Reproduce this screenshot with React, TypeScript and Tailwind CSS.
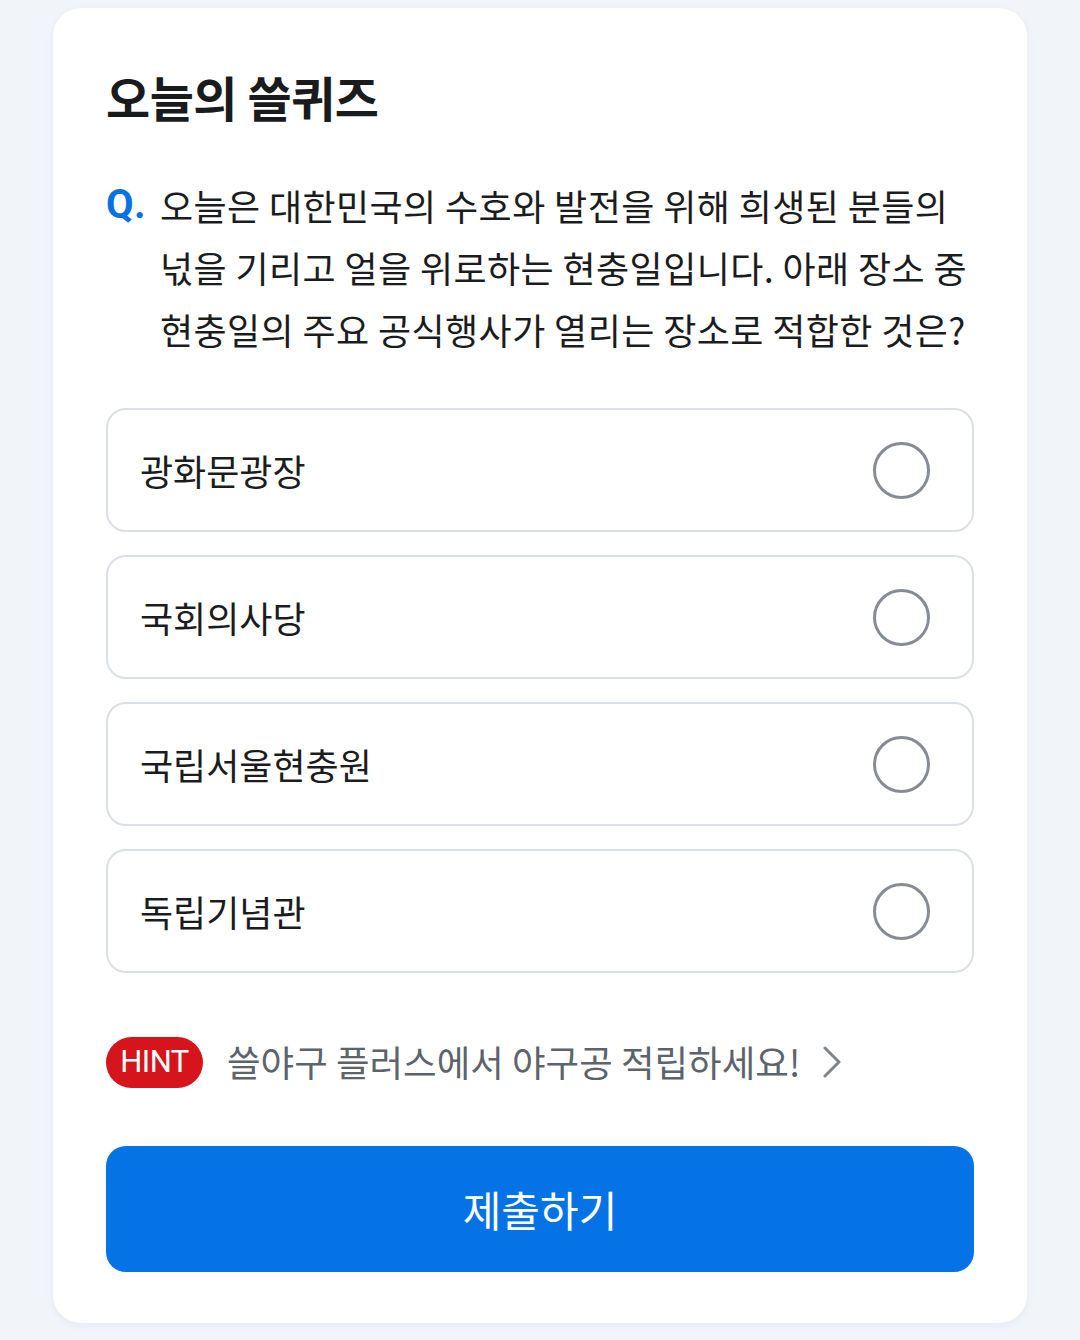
const options = ['광화문광장', '국회의사당', '국립서울현충원', '독립기념관'];

const font = { fontFamily: '"Noto Sans CJK KR", "Noto Sans", sans-serif' };

function Option({ label }: { label: string }) {
  return (
    <button className="flex h-[124px] w-full items-center justify-between rounded-[20px] border-2 border-[#dcdfe3] bg-white pl-[32px] pr-[42px] text-left">
      <span className="text-[36px] text-[#1b1c1e]">{label}</span>
      <span className="h-[57px] w-[57px] rounded-full border-[3px] border-[#878c94]" />
    </button>
  );
}

export default function App() {
  return (
    <div className="min-h-[1340px] bg-[#f1f4f9] px-[53px] pt-[8px]" style={font}>
      <div className="rounded-[28px] bg-white px-[53px] pb-[51px] pt-[58px] shadow-[0_2px_10px_rgba(30,50,90,0.05)]">
        <h1 className="text-[48px] font-bold leading-[60px] tracking-[-0.5px] text-[#1a1b1d]">오늘의 쓸퀴즈</h1>

        <div className="mt-[48px] flex text-[36px] leading-[62px] tracking-[0.4px] text-[#1b1c1e]">
          <span className="w-[54px] shrink-0 text-[40px] font-bold text-[#0a72e0]" style={{ fontFamily: 'Roboto, sans-serif' }}>Q.</span>
          <p className="break-keep">
            오늘은 대한민국의 수호와 발전을 위해 희생된 분들의 넋을 기리고 얼을 위로하는 현충일입니다. 아래 장소 중 현충일의 주요 공식행사가 열리는 장소로 적합한 것은?
          </p>
        </div>

        <div className="mt-[48px] flex flex-col gap-[23px]">
          {options.map((o) => <Option key={o} label={o} />)}
        </div>

        <div className="mt-[62px] flex items-center">
          <span className="flex h-[51px] w-[97px] items-center justify-center rounded-full bg-[#d5151b] text-[31px] tracking-[-0.5px] text-white" style={{ fontFamily: 'Roboto, sans-serif' }}>HINT</span>
          <span className="ml-[24px] text-[36.5px] text-[#5d636b]">쓸야구 플러스에서 야구공 적립하세요!</span>
          <svg width="18" height="32" viewBox="0 0 18 32" className="ml-[22px]" fill="none" stroke="#7f848b" strokeWidth="3" strokeLinecap="round" strokeLinejoin="round">
            <polyline points="2,2 16,16 2,30" />
          </svg>
        </div>

        <button className="mt-[56px] flex h-[126px] w-full items-center justify-center rounded-[20px] bg-[#0573e6] text-[42px] text-white">
          제출하기
        </button>
      </div>
    </div>
  );
}
